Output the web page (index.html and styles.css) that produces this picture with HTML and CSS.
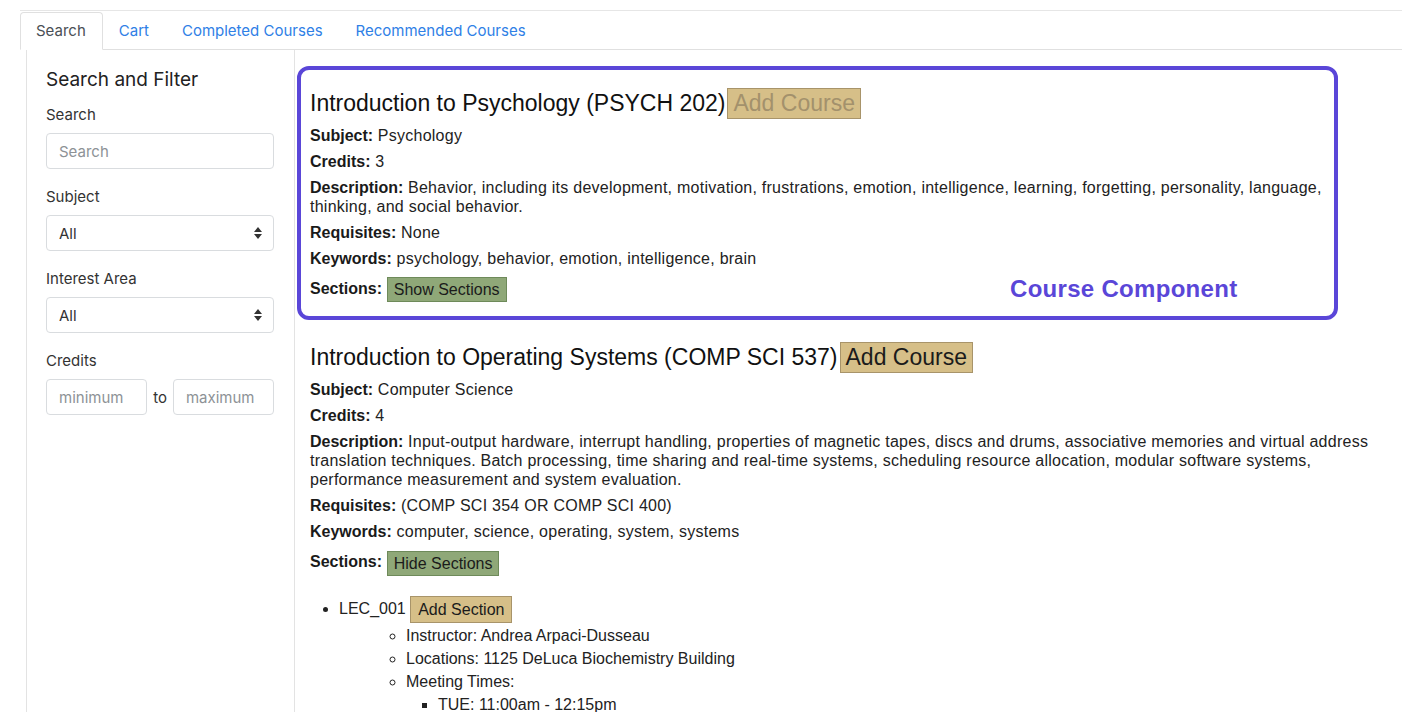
FILE: index.html
```html
<!DOCTYPE html>
<html lang="en">
<head>
    <meta charset="UTF-8">
    <meta name="viewport" content="width=device-width, initial-scale=1.0">
    <title>Course Search</title>
    <link rel="stylesheet" href="styles.css">
</head>
<body>
    <div class="page">
        <!-- Tabs -->
        <ul class="tabs">
            <li class="tab active">Search</li>
            <li class="tab">Cart</li>
            <li class="tab">Completed Courses</li>
            <li class="tab">Recommended Courses</li>
        </ul>

        <div class="layout">
            <div class="sidebar">
                <h3>Search and Filter</h3>

                <div class="field">
                    <label for="search">Search</label>
                    <input type="text" id="search" placeholder="Search">
                </div>

                <div class="field">
                    <label for="subject">Subject</label>
                    <div class="select-wrap">
                        <select id="subject">
                            <option>All</option>
                        </select>
                        <svg class="select-arrow" width="8" height="12" viewBox="0 0 8 12"><path d="M4 0L8 5H0Z M4 12L0 7H8Z" fill="#333"/></svg>
                    </div>
                </div>

                <div class="field">
                    <label for="area">Interest Area</label>
                    <div class="select-wrap">
                        <select id="area">
                            <option>All</option>
                        </select>
                        <svg class="select-arrow" width="8" height="12" viewBox="0 0 8 12"><path d="M4 0L8 5H0Z M4 12L0 7H8Z" fill="#333"/></svg>
                    </div>
                </div>

                <div class="field">
                    <label>Credits</label>
                    <div class="range-inputs">
                        <input type="text" placeholder="minimum">
                        <span>to</span>
                        <input type="text" placeholder="maximum">
                    </div>
                </div>
            </div>

            <div class="courses">
                <!-- Course 1, with the annotation box over it -->
                <div class="course annotated">
                    <h2>Introduction to Psychology (PSYCH 202)<button class="btn-tan big faded">Add Course</button></h2>
                    <p><strong>Subject:</strong> Psychology</p>
                    <p><strong>Credits:</strong> 3</p>
                    <p><strong>Description:</strong> Behavior, including its development, motivation, frustrations, emotion, intelligence, learning, forgetting, personality, language, thinking, and social behavior.</p>
                    <p><strong>Requisites:</strong> None</p>
                    <p><strong>Keywords:</strong> psychology, behavior, emotion, intelligence, brain</p>
                    <p class="sections"><strong>Sections:</strong> <button class="btn-green">Show Sections</button></p>

                    <div class="annotation">
                        <span class="annotation-label">Course Component</span>
                    </div>
                </div>

                <!-- Course 2 -->
                <div class="course">
                    <h2>Introduction to Operating Systems (COMP SCI 537)<button class="btn-tan big">Add Course</button></h2>
                    <p><strong>Subject:</strong> Computer Science</p>
                    <p><strong>Credits:</strong> 4</p>
                    <p><strong>Description:</strong> Input-output hardware, interrupt handling, properties of magnetic tapes, discs and drums, associative memories and virtual address translation techniques. Batch processing, time sharing and real-time systems, scheduling resource allocation, modular software systems, performance measurement and system evaluation.</p>
                    <p><strong>Requisites:</strong> (COMP SCI 354 OR COMP SCI 400)</p>
                    <p><strong>Keywords:</strong> computer, science, operating, system, systems</p>
                    <p class="sections"><strong>Sections:</strong> <button class="btn-green">Hide Sections</button></p>

                    <ul class="section-list">
                        <li class="section-row">LEC_001 <button class="btn-tan">Add Section</button>
                            <ul class="section-info">
                                <li>Instructor: Andrea Arpaci-Dusseau</li>
                                <li>Locations: 1125 DeLuca Biochemistry Building</li>
                                <li>Meeting Times:
                                    <ul class="times">
                                        <li>TUE: 11:00am - 12:15pm</li>
                                        <li>THU: 11:00am - 12:15pm</li>
                                    </ul>
                                </li>
                            </ul>
                        </li>
                    </ul>
                </div>
            </div>
        </div>
    </div>
</body>
</html>
```

FILE: styles.css
```css
html, body {
    overflow: hidden;
}
body {
    margin: 0;
    font-family: "Liberation Sans", Arial, sans-serif;
    color: #222;
    background: #fff;
}
.page {
    margin: 10px 0 0 20px;
    border-top: 1px solid #e6e6e6;
}

/* tabs */
.tabs {
    display: flex;
    list-style: none;
    margin: 0;
    padding: 1px 0 0 0;
    border-bottom: 1px solid #e0e0e0;
    font-family: Inter, "Noto Sans", sans-serif;
    font-size: 15px;
}
.tab {
    padding: 7px 16px 7px 15px;
    line-height: 22px;
    color: #2f80e6;
    border: 1px solid transparent;
    border-radius: 4px 4px 0 0;
    margin-bottom: -1px;
}
.tab.active {
    color: #4a4f55;
    background: #fff;
    border-color: #e0e0e0 #e0e0e0 #fff;
}

.layout {
    display: flex;
    min-height: 700px;
}

/* sidebar */
.sidebar {
    width: 228px;
    margin-left: 6px;
    padding: 18px 20px 0 19px;
    border-left: 1px solid #e3e3e3;
    border-right: 1px solid #e3e3e3;
    font-family: Inter, "Noto Sans", sans-serif;
}
.sidebar h3 {
    margin: 0 0 12px 0;
    font-size: 19px;
    line-height: 24px;
    font-weight: 400;
    color: #222;
}
.field {
    margin-bottom: 17px;
}
.field label {
    display: block;
    font-size: 15px;
    line-height: 22px;
    margin-bottom: 7px;
    color: #333;
}
.field input, .field select {
    width: 100%;
    box-sizing: border-box;
    height: 36px;
    padding: 0 12px;
    border: 1px solid #d9dcdf;
    border-radius: 4px;
    font-family: Inter, "Noto Sans", sans-serif;
    font-size: 15px;
    color: #333;
    background: #fff;
}
.field input::placeholder {
    color: #8d9296;
}
.field select {
    appearance: none;
    -webkit-appearance: none;
}
.select-wrap {
    position: relative;
}
.select-arrow {
    position: absolute;
    right: 12px;
    top: 12px;
    pointer-events: none;
}
.range-inputs {
    display: flex;
    align-items: center;
    gap: 6px;
    font-size: 15px;
    color: #333;
}
.range-inputs input {
    flex: 1;
    min-width: 0;
}

/* courses */
.courses {
    flex: 1;
    padding-top: 5px;
}
.course {
    padding: 33px 24px 0 15px;
}
.course h2 {
    margin: 0 0 7px 0;
    font-size: 23px;
    line-height: 31px;
    font-weight: 400;
    color: #111;
}
.course p {
    margin: 0 0 7px 0;
    font-size: 16px;
    line-height: 19px;
    letter-spacing: 0.25px;
}
.course strong {
    font-weight: 700;
    color: #1a1a1a;
    letter-spacing: 0;
}
.course p.sections {
    line-height: 27px;
}

.btn-tan, .btn-green {
    font-family: "Liberation Sans", Arial, sans-serif;
    font-size: 16px;
    color: #1b1b1b;
    border-radius: 0;
    vertical-align: middle;
    letter-spacing: 0;
    cursor: pointer;
}
.btn-tan {
    background: #d6bf88;
    border: 1px solid #a8946a;
    padding: 0 7px;
    line-height: 25px;
}
.btn-tan.big {
    font-size: 23px;
    line-height: 29px;
    padding: 0 5px;
    margin-left: 2px;
    vertical-align: top;
}
.btn-tan.faded {
    color: #a3916c;
}
.btn-green {
    background: #8fa878;
    border: 1px solid #6e8a5a;
    padding: 0 6px;
    line-height: 23px;
}

/* annotation drawn over the first course */
.annotated {
    position: relative;
}
.annotation {
    position: absolute;
    top: 11px;
    left: 2px;
    width: 1033px;
    height: 246px;
    border: 4px solid #5a46d8;
    border-radius: 12px;
}
.annotation-label {
    position: absolute;
    left: 709px;
    top: 205px;
    font-size: 24px;
    line-height: 28px;
    font-weight: 700;
    letter-spacing: 0.3px;
    color: #5a46d8;
}

/* section list */
.section-list {
    margin: 18px 0 0 0;
    padding-left: 29px;
    font-size: 16px;
}
.section-row {
    line-height: 30px;
}
.section-info {
    margin: 0;
    padding-left: 67px;
    list-style: circle;
    line-height: 23px;
}
.times {
    margin: 0;
    padding-left: 32px;
    list-style: square;
}
```
